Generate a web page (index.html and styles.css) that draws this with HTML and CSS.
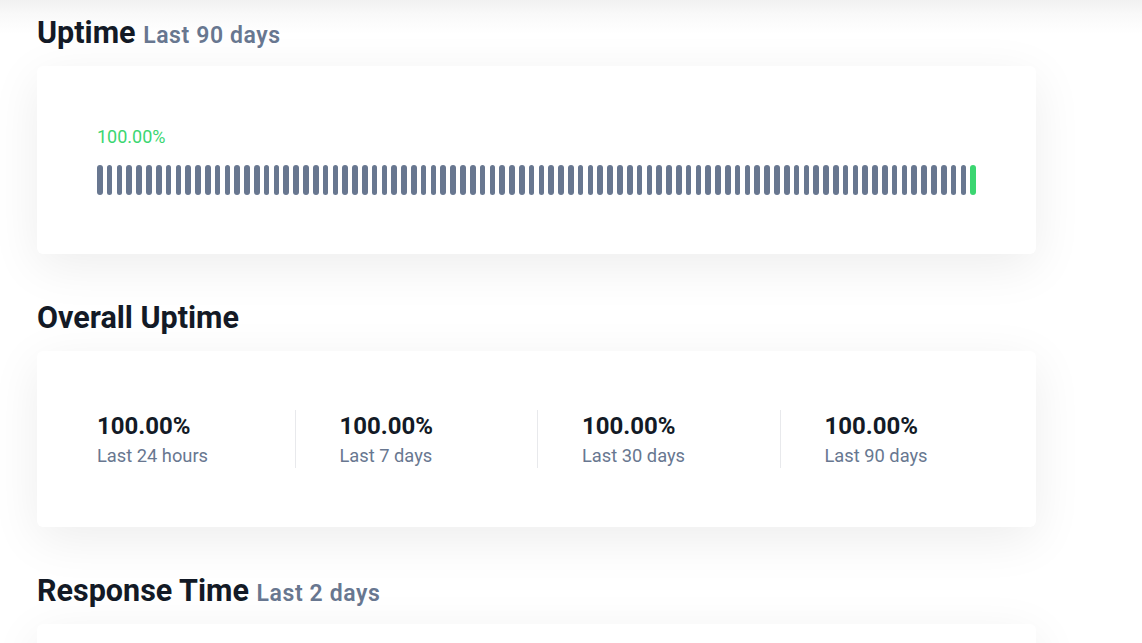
FILE: index.html
```html
<!DOCTYPE html>
<html lang="en">
<head>
<meta charset="utf-8">
<title>Status</title>
<link rel="stylesheet" href="styles.css">
</head>
<body>
<main class="page">
  <section class="section">
    <h2 class="title">Uptime <span class="sub">Last 90 days</span></h2>
    <div class="card card-uptime">
      <div class="pct">100.00%</div>
      <div class="bars" id="bars"></div>
    </div>
  </section>
  <section class="section">
    <h2 class="title">Overall Uptime</h2>
    <div class="card card-overall">
      <div class="stat"><div class="stat-val">100.00%</div><div class="stat-lbl">Last 24 hours</div></div>
      <div class="stat"><div class="stat-val">100.00%</div><div class="stat-lbl">Last 7 days</div></div>
      <div class="stat"><div class="stat-val">100.00%</div><div class="stat-lbl">Last 30 days</div></div>
      <div class="stat"><div class="stat-val">100.00%</div><div class="stat-lbl">Last 90 days</div></div>
    </div>
  </section>
  <section class="section">
    <h2 class="title">Response Time <span class="sub">Last 2 days</span></h2>
    <div class="card card-response"></div>
  </section>
</main>
<script>
  var b = document.getElementById('bars');
  for (var i = 0; i < 90; i++) {
    var d = document.createElement('span');
    d.className = i === 89 ? 'bar bar-up' : 'bar';
    b.appendChild(d);
  }
</script>
</body>
</html>
```
FILE: styles.css
```css
html, body {
  margin: 0;
  padding: 0;
}
body {
  background: linear-gradient(#f1f1f1 0, #f9f9f9 14px, #ffffff 34px) no-repeat, #ffffff;
  font-family: Roboto, "Noto Sans", "Liberation Sans", sans-serif;
  color: #131a26;
  overflow: hidden;
  height: 643px;
}
.page {
  width: 999px;
  padding-left: 37px;
  padding-top: 15px;
}
.section {
  margin-bottom: 46px;
}
.title {
  margin: 0 0 15px 0;
  height: 36px;
  font-size: 30.5px;
  line-height: 36px;
  font-weight: 700;
  color: #131a26;
}
.sub {
  font-size: 23px;
  line-height: 1;
  font-weight: 600;
  letter-spacing: 0.6px;
  color: #687790;
}
.card {
  background: #ffffff;
  border-radius: 6px;
  box-shadow: 0 12px 50px rgba(0, 0, 0, 0.075);
}
.card-uptime {
  padding: 60px 60px 59px 60px;
}
.pct {
  font-size: 18px;
  line-height: 22px;
  color: #3bd671;
}
.bars {
  margin-top: 17px;
  display: flex;
  gap: 4.2px;
  height: 30px;
}
.bar {
  flex: 1;
  background: #687790;
  border-radius: 3px;
}
.bar-up {
  background: #3bd671;
}
.card-overall {
  padding: 59px 14px 59px 15px;
  display: grid;
  grid-template-columns: repeat(4, 1fr);
}
.stat {
  padding: 2px 0 0 45px;
  height: 56px;
}
.stat + .stat {
  border-left: 1px solid #e8e9ec;
  padding-left: 44px;
}
.stat-val {
  font-size: 24px;
  line-height: 28px;
  font-weight: 700;
  color: #131a26;
}
.stat-lbl {
  margin-top: 4px;
  font-size: 18.3px;
  line-height: 24px;
  color: #687790;
}
.card-response {
  height: 200px;
}
```
